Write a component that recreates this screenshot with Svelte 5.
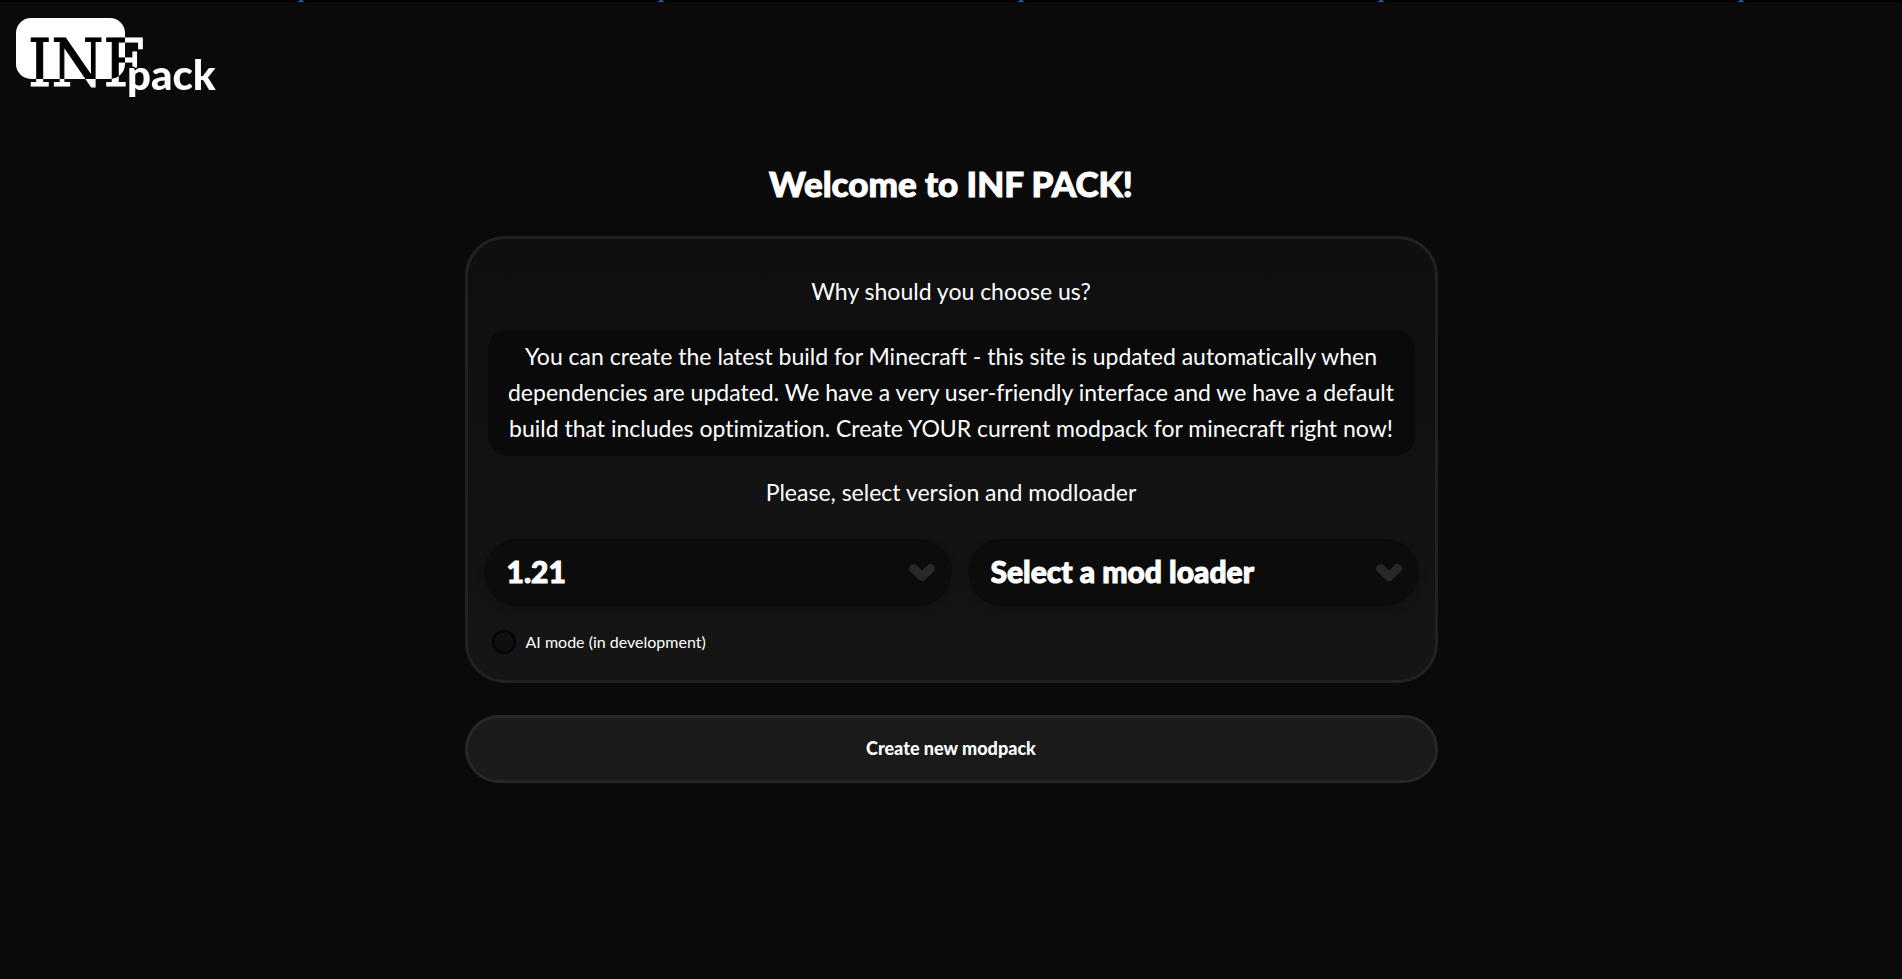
<script>
	const versions = ['1.21', '1.20.6', '1.20.4', '1.20.1', '1.19.4']
	const loaders = ['Fabric', 'Forge', 'Quilt', 'NeoForge']

	let version = '1.21'
	let loader = ''
	let aiMode = false

	// blue marks in the top strip
	const marks = [0, 1, 2, 3, 4]
</script>

<div class="strip" aria-hidden="true">
	{#each marks as mark (mark)}
		<span></span>
	{/each}
</div>

<header>
	<a href="/" aria-label="INF pack">
		<svg width="202" height="78" viewBox="0 0 202 78">
			<rect width="109" height="61" rx="15" fill="#fff" />
			<text class="inf" x="12" y="68">INF</text>
			<text class="pack" x="111" y="72">pack</text>
		</svg>
	</a>
</header>

<main>
	<h1>Welcome to INF PACK!</h1>

	<section class="card">
		<p>Why should you choose us?</p>
		<p class="about">
			You can create the latest build for Minecraft - this site is updated automatically when<br />
			dependencies are updated. We have a very user-friendly interface and we have a default<br />
			build that includes optimization. Create YOUR current modpack for minecraft right now!
		</p>
		<p>Please, select version and modloader</p>

		<div class="selects">
			<div class="field version">
				<select bind:value={version} aria-label="Version">
					{#each versions as item}
						<option value={item}>{item}</option>
					{/each}
				</select>
				<svg width="26" height="18" viewBox="0 0 26 18" aria-hidden="true">
					<path d="M4.5 4.5 13 12.5 21.5 4.5" />
				</svg>
			</div>
			<div class="field loader">
				<select bind:value={loader} aria-label="Mod loader">
					<option value="">Select a mod loader</option>
					{#each loaders as item}
						<option value={item}>{item}</option>
					{/each}
				</select>
				<svg width="26" height="18" viewBox="0 0 26 18" aria-hidden="true">
					<path d="M4.5 4.5 13 12.5 21.5 4.5" />
				</svg>
			</div>
		</div>

		<label>
			<input type="checkbox" bind:checked={aiMode} />
			AI mode (in development)
		</label>
	</section>

	<button type="button">Create new modpack</button>
</main>

<style>
	:global(body) {
		background: #0a0a0a;
		color: #fff;
		font-family: 'Gill Sans MT', Lato, sans-serif;
		font-variant-ligatures: none;
	}

	.strip {
		display: flex;
		gap: 354px;
		height: 2px;
		padding-left: 298px;
		overflow: hidden;
		background: #000;
	}

	.strip span {
		flex: none;
		width: 6px;
		height: 2px;
		background: linear-gradient(#0a8ae6, #0a8ae6) center top / 2px 1px no-repeat,
			linear-gradient(#0a64aa, #0a64aa) center bottom / 6px 1px no-repeat;
	}

	header {
		padding: 16px;
	}

	header a {
		display: block;
		width: 202px;
	}

	header svg {
		display: block;
		overflow: visible;
		isolation: isolate;
	}

	/* letters invert where they cross the plate */
	.inf {
		font-family: 'DejaVu Serif Condensed', 'DejaVu Serif', serif;
		font-stretch: condensed;
		font-size: 66px;
		fill: #fff;
		stroke: #fff;
		stroke-width: 1px;
		mix-blend-mode: difference;
	}

	.pack {
		font-family: Lato, sans-serif;
		font-size: 42px;
		font-weight: 900;
		fill: #fff;
		stroke: #0a0a0a;
		stroke-width: 3px;
		paint-order: stroke;
	}

	main {
		display: flex;
		flex-direction: column;
		align-items: center;
		padding-top: 46px;
	}

	h1 {
		margin: 0 0 28px;
		font-size: 35px;
		font-weight: 900;
		line-height: 50px;
		-webkit-text-stroke: 1px #fff;
	}

	.card {
		box-sizing: border-box;
		width: calc(50% + 22px);
		padding: 34px 16px 26px;
		border: 3px solid #212121;
		border-radius: 40px;
		background: linear-gradient(#0f0f0f, #151515);
	}

	p {
		margin: 0;
		font-size: 23px;
		line-height: 36px;
		text-align: center;
	}

	.about {
		margin: 21px 4px 18px;
		padding: 8px 0 10px;
		border-radius: 20px;
		background: #0a0a0a;
	}

	.selects {
		display: flex;
		gap: 16px;
		margin-top: 29px;
	}

	.field {
		position: relative;
		min-width: 0;
	}

	.version {
		flex: 468 1 0;
	}

	.loader {
		flex: 451 1 0;
	}

	select {
		appearance: none;
		display: block;
		width: 100%;
		height: 67px;
		padding: 0 56px 4px 23px;
		border: 0;
		border-radius: 34px;
		background: #0c0c0c;
		box-shadow: 0 3px 8px rgb(0 0 0 / 0.15);
		color: #fff;
		font: 900 30px Lato, sans-serif;
		-webkit-text-stroke: 1px #fff;
	}

	.field svg {
		position: absolute;
		top: 25px;
		right: 17px;
		pointer-events: none;
	}

	.field path {
		fill: none;
		stroke: #282828;
		stroke-width: 9;
		stroke-linecap: round;
		stroke-linejoin: round;
	}

	label {
		display: flex;
		align-items: center;
		gap: 10px;
		width: max-content;
		margin: 24px 0 0 8px;
		font-size: 16px;
		line-height: 24px;
	}

	input {
		appearance: none;
		box-sizing: border-box;
		width: 24px;
		height: 24px;
		margin: 0;
		border: 2px solid #000;
		border-radius: 50%;
		background: #0f0f0f;
	}

	input:checked {
		background: #fff;
	}

	button {
		box-sizing: border-box;
		width: calc(50% + 22px);
		height: 68px;
		margin-top: 32px;
		padding: 0 0 2px;
		border: 3px solid #272727;
		border-radius: 34px;
		background: #1a1a1a;
		color: #fff;
		font: 900 18px Lato, sans-serif;
		cursor: pointer;
	}
</style>
